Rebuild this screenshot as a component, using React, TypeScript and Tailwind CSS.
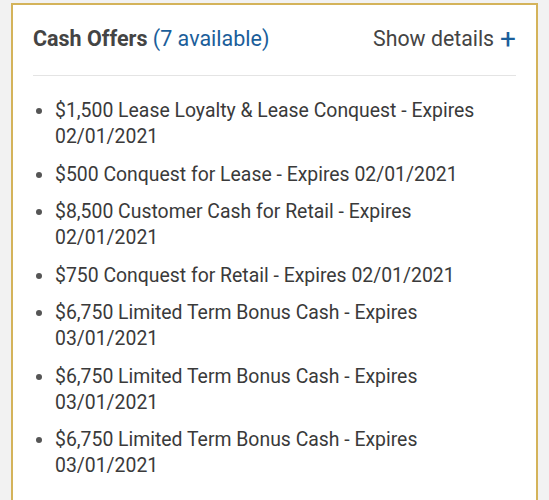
import React from "react";

const offers = [
  "$1,500 Lease Loyalty & Lease Conquest - Expires 02/01/2021",
  "$500 Conquest for Lease - Expires 02/01/2021",
  "$8,500 Customer Cash for Retail - Expires 02/01/2021",
  "$750 Conquest for Retail - Expires 02/01/2021",
  "$6,750 Limited Term Bonus Cash - Expires 03/01/2021",
  "$6,750 Limited Term Bonus Cash - Expires 03/01/2021",
  "$6,750 Limited Term Bonus Cash - Expires 03/01/2021",
];

export default function App() {
  return (
    <div className="h-[500px] w-[549px] overflow-hidden bg-[#f2f2f2] pl-[11px] pr-[11px] pt-[3px]" style={{ fontFamily: "Roboto, 'Noto Sans', sans-serif" }}>
      <div className="h-[520px] border-2 border-[#d4b35a] bg-white px-[20px]">
        <div className="flex items-center justify-between pb-[23px] pt-[21px]">
          <div className="text-[21.5px] leading-[26px]">
            <span className="font-bold text-[#444]">Cash Offers</span>{" "}
            <span className="text-[#1b5e9a]">(7 available)</span>
          </div>
          <div className="flex items-center text-[21.3px] leading-[26px] text-[#444]">
            Show details
            <span className="ml-[6px] text-[28px] leading-[26px] text-[#1b5e9a]">+</span>
          </div>
        </div>
        <div className="h-px bg-[#e4e4e4]" />
        <ul className="mt-[22px] list-disc pl-[22px] text-[19.4px] leading-[26px] text-[#3a3a3a] marker:text-[#555]">
          {offers.map((o, i) => (
            <li key={i} className="mb-[11.5px] pl-[0px]">
              {o}
            </li>
          ))}
        </ul>
      </div>
    </div>
  );
}
